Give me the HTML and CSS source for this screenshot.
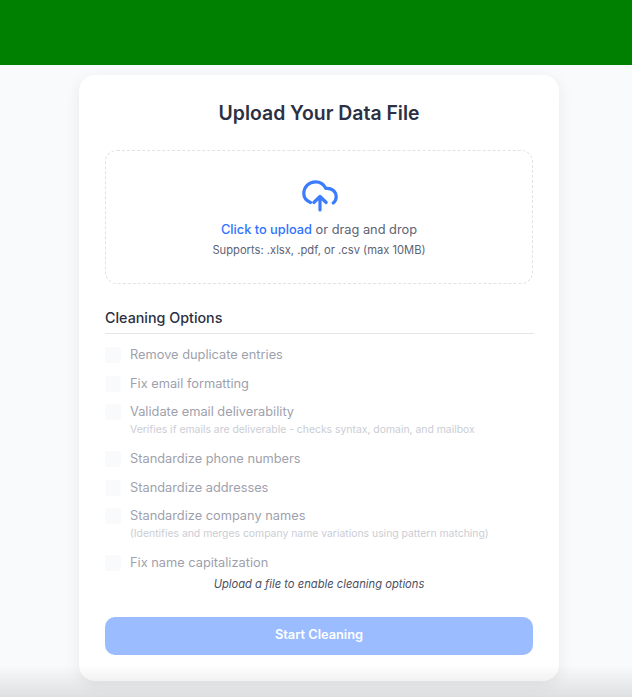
FILE: index.html
```html
<!DOCTYPE html>
<html lang="en">
<head>
<meta charset="utf-8">
<title>Upload Your Data File</title>
<link rel="stylesheet" href="styles.css">
</head>
<body>
<header class="topbar"></header>
<main class="page">
  <section class="card">
    <h1 class="title">Upload Your Data File</h1>
    <div class="dropzone">
      <svg class="cloud" viewBox="0 0 36 32" width="36" height="32" fill="none" stroke="#3b7cff" stroke-width="3.200" stroke-linecap="round" stroke-linejoin="round">
        <path d="M8.500 22.500C4.200 20.800 1.800 17.600 1.800 13.600 1.800 7 7 1.800 13.500 1.800c4.700 0 8.500 2.500 10.300 6.600 5.500-.8 10.400 3 10.400 8.300 0 2.600-1.100 4.700-3 6.200"/>
        <path d="M18 30V17M11.800 22.500 18 16.500l6.200 6"/>
      </svg>
      <p class="drop-main"><span class="link">Click to upload</span> or drag and drop</p>
      <p class="drop-sub">Supports: .xlsx, .pdf, or .csv (max 10MB)</p>
    </div>
    <h2 class="section-title">Cleaning Options</h2>
    <ul class="options">
      <li class="option"><span class="box"></span><div><div class="label">Remove duplicate entries</div></div></li>
      <li class="option"><span class="box"></span><div><div class="label">Fix email formatting</div></div></li>
      <li class="option"><span class="box"></span><div><div class="label">Validate email deliverability</div><div class="hint">Verifies if emails are deliverable - checks syntax, domain, and mailbox</div></div></li>
      <li class="option"><span class="box"></span><div><div class="label">Standardize phone numbers</div></div></li>
      <li class="option"><span class="box"></span><div><div class="label">Standardize addresses</div></div></li>
      <li class="option"><span class="box"></span><div><div class="label">Standardize company names</div><div class="hint">(Identifies and merges company name variations using pattern matching)</div></div></li>
      <li class="option"><span class="box"></span><div><div class="label">Fix name capitalization</div></div></li>
    </ul>
    <p class="notice">Upload a file to enable cleaning options</p>
    <button class="start" type="button">Start Cleaning</button>
  </section>
</main>
<div class="fade"></div>
</body>
</html>
```
FILE: styles.css
```css
* { box-sizing: border-box; }
html, body { margin: 0; height: 100%; }
body {
  background: #f9fafb;
  font-family: Inter, "Liberation Sans", sans-serif;
  color: #2b3044;
  overflow: hidden;
}
.topbar { height: 65px; background: #008000; }
.page { display: flex; justify-content: center; padding: 10px 0 0 6px; }
.card {
  width: 480px;
  height: 606px;
  background: #fff;
  border-radius: 16px;
  padding: 26px;
  box-shadow: 0 4px 16px rgba(0, 0, 0, 0.07);
}
.title {
  margin: 0 0 25px;
  font-size: 19.400px;
  line-height: 24px;
  font-weight: 600;
  text-align: center;
  color: #2b3044;
}
.dropzone {
  height: 134px;
  border: 1px dashed #e0e2e6;
  border-radius: 12px;
  padding-top: 29px;
  display: flex;
  flex-direction: column;
  align-items: center;
}
.cloud { display: block; margin-left: 1px; }
.drop-main { margin: 9px 0 0; font-size: 12.800px; line-height: 18px; color: #5d6275; }
.link { color: #2f72ff; font-weight: 500; }
.drop-sub { margin: 3px 0 0; font-size: 11.200px; line-height: 16px; color: #5d6275; }
.section-title {
  margin: 25px 0 0;
  width: 429px;
  height: 25px;
  font-size: 14.300px;
  line-height: 18px;
  font-weight: 500;
  color: #2b3044;
  border-bottom: 1px solid #e3e5e8;
}
.options { list-style: none; margin: 13px 0 0; padding: 0; }
.option { display: flex; gap: 9px; margin-bottom: 12.700px; opacity: 0.6; }
.box {
  flex: none;
  width: 16px;
  height: 16px;
  border-radius: 3px;
  background: #f6f7fa;
}
.label { font-size: 12.800px; line-height: 16px; color: #5d6275; }
.hint { margin-top: 2px; font-size: 10.400px; line-height: 16px; color: #a8acb8; }
.notice {
  margin: -8px 0 0;
  text-align: center;
  font-size: 11.200px;
  line-height: 16px;
  font-style: italic;
  color: #4b5063;
}
.start {
  display: block;
  width: 100%;
  height: 38px;
  margin-top: 25px;
  padding: 0 0 1px;
  border: 0;
  border-radius: 10px;
  background: #9bbcff;
  color: #fff;
  font: 600 12.800px/16px Inter, "Liberation Sans", sans-serif;
}
.fade {
  position: fixed;
  left: 0;
  right: 0;
  bottom: 0;
  height: 32px;
  background: linear-gradient(to bottom, rgba(0,0,0,0), rgba(0,0,0,0.1));
  pointer-events: none;
}
```
